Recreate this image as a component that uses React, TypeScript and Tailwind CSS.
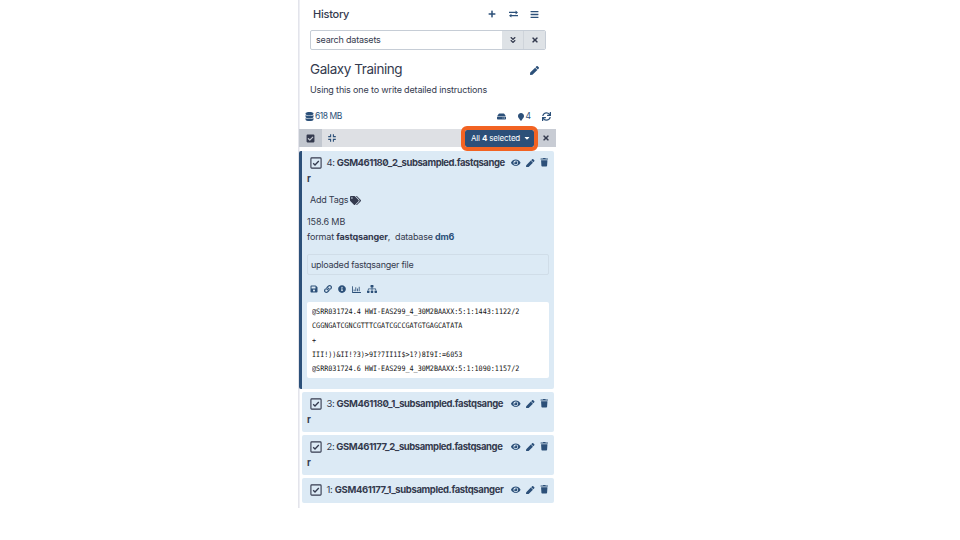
import React from "react";
import {
  FaPlus, FaBars, FaAngleDoubleDown, FaTimes, FaPen, FaDatabase, FaHdd, FaMapMarker,
  FaSync, FaCheckSquare, FaEye, FaTrash, FaTags, FaSave, FaLink, FaInfoCircle, FaRegChartBar, FaSitemap, FaCaretDown,
} from "react-icons/fa";

function Checkbox() {
  return (
    <svg viewBox="0 0 12 12" className="h-3 w-3 shrink-0" fill="none" stroke="#343a4e">
      <rect x="0.9" y="0.9" width="10.2" height="10.2" rx="0.8" strokeWidth="1.1" />
      <path d="M3.2 6.2 5 8 8.8 4" strokeWidth="1.3" />
    </svg>
  );
}

function Compress() {
  return (
    <svg viewBox="0 0 8 8" className="h-2 w-2" fill="none" stroke="#2c5079" strokeWidth="1.1">
      <path d="M0.2 2.6H2.6V0.2M5.4 0.2V2.6H7.8M7.8 5.4H5.4V7.8M2.6 7.8V5.4H0.2" />
    </svg>
  );
}

function Exchange() {
  return (
    <svg viewBox="0 0 9 8" className="ml-[13px] h-2 w-[9px]" fill="#2c5079">
      <path d="M0 1.8H6.6V0.4L9 2.4 6.6 4.4V3H0ZM9 5H2.4V3.8L0 5.7 2.4 7.6V6.2H9Z" />
    </svg>
  );
}

type RowProps = { id: number; name: string; wrap?: boolean; idClass: string; nameClass: string };

function RowHead({ id, name, wrap, idClass, nameClass }: RowProps) {
  return (
    <>
      <div className="flex h-[22px] items-center">
        <Checkbox />
        <span className={"ml-[4.5px] shrink-0 text-[9.5px] leading-none whitespace-nowrap tracking-[-0.4px] " + idClass}>{id}:</span>
        <span className={"text-[9.5px] leading-none font-bold whitespace-nowrap slashed-zero " + nameClass}>{name}</span>
        <span className="ml-auto flex shrink-0 items-center text-[#2c5079]">
          <FaEye className="mb-px size-[9.5px]" />
          <FaPen className="ml-[5.5px] size-[8.5px]" />
          <FaTrash className="mb-px ml-[5px] size-[8.5px]" />
        </span>
      </div>
      {wrap && <div className="-ml-[3px] text-[9.5px] leading-[10px] font-bold">r</div>}
    </>
  );
}

export default function App() {
  return (
    <div className="flex h-[540px] w-[960px] bg-white pl-[298px] font-['Inter','Liberation_Sans',sans-serif] text-[#343a4e]">
      <div className="h-[508px] w-[258px] border-l border-[#e3e4eb] shadow-[inset_1px_0_0_#eeeff4]">
        <div className="flex h-7 items-center pr-[17px] pl-[14px]">
          <span className="text-[11px] leading-none font-medium tracking-[-0.25px]">History</span>
          <div className="ml-auto flex items-center text-[#2c5079]">
            <FaPlus className="size-2" />
            <Exchange />
            <FaBars className="ml-[12px] size-[9px]" />
          </div>
        </div>
        <div className="mt-[2px] ml-[11px] flex h-5 w-[236px] overflow-hidden rounded-[2px] border border-[#c6cdd6]">
          <div className="flex flex-1 items-center pl-[5px] text-[9px] tracking-[-0.2px]">search datasets</div>
          <div className="flex w-[21px] items-center justify-center bg-[#dee2e6]"><FaAngleDoubleDown className="size-2" /></div>
          <div className="flex w-[22px] items-center justify-center border-l border-[#cfd4da] bg-[#dee2e6]"><FaTimes className="size-2" /></div>
        </div>
        <div className="flex h-[38px] items-center pr-[17px] pl-[11px]">
          <span className="pt-[2px] text-[13.5px] leading-none tracking-[-0.43px]">Galaxy Training</span>
          <FaPen className="mt-[2px] ml-auto size-[9px] text-[#2c5079]" />
        </div>
        <div className="flex h-1 items-center pl-[11px] text-[9px] tracking-[-0.15px]">Using this one to write detailed instructions</div>
        <div className="mt-[16px] flex h-[17px] items-center pr-[5px] pl-[6px] text-[8.5px] text-[#2c5079]">
          <FaDatabase className="size-[9px]" />
          <span className="ml-px tracking-[-0.45px]">618 MB</span>
          <FaHdd className="ml-auto size-[9px]" />
          <FaMapMarker className="ml-[11px] size-2" />
          <span className="ml-px">4</span>
          <FaSync className="ml-[11px] size-[9px]" />
        </div>
        <div className="mt-1 flex h-[18px] items-center bg-[#dee0e4]">
          <div className="flex h-full w-[23px] items-center justify-center bg-[#c2c7cf]"><FaCheckSquare className="size-[9px]" /></div>
          <div className="ml-[6px]"><Compress /></div>
          <div className="relative ml-auto flex h-[17px] w-[69px] shrink-0 items-center rounded-[2px] bg-[#2c5079] pl-[6px] text-[8px] text-white outline-4 outline-[#f26322]">
            <span className="whitespace-nowrap tracking-[-0.17px]">All <b>4</b> selected</span>
            <FaCaretDown className="mb-px ml-[3px] size-[8px]" />
          </div>
          <div className="ml-[3px] flex h-full w-[19px] items-center justify-center bg-[#c8ccd4] pr-[2px]"><FaTimes className="size-2" /></div>
        </div>
        <div className="mt-[4px] h-[238px] w-[255px] rounded-[2px] border-l-[3px] border-[#2c5079] bg-[#dceaf5] pt-px pr-[6px] pl-[8px]">
          <RowHead id={4} name="GSM461180_2_subsampled.fastqsange" wrap idClass="w-[10.2px]" nameClass="tracking-[-0.44px]" />
          <div className="mt-[8px] flex h-4 items-center text-[9px]"><span className="tracking-[-0.25px]">Add Tags</span><FaTags className="ml-[2px] size-[11px]" /></div>
          <div className="mt-[6px] -ml-[3px] text-[9px] leading-[15px]">
            <div className="tracking-[-0.1px]">158.6 MB</div>
            <div><span className="tracking-[-0.16px]">format <b>fastqsanger</b>,</span><span className="ml-[5px] tracking-[-0.2px]">database <b className="text-[#2c5079]">dm6</b></span></div>
          </div>
          <div className="mt-[10px] -ml-[3px] flex h-[21px] w-[242px] items-center rounded-[2px] border border-[#d0dde8] pl-[3px] text-[9px] tracking-[-0.24px]">uploaded fastqsanger file</div>
          <div className="mt-[10px] flex h-2 items-center gap-[6px] text-[#2c5079]">
            <FaSave className="size-2" /><FaLink className="size-2" /><FaInfoCircle className="size-2" /><FaRegChartBar className="size-[9px]" /><FaSitemap className="size-[10px]" />
          </div>
          <div className="mt-[9px] -ml-[3px] h-[76px] w-[242px] overflow-hidden rounded-[2px] bg-white pt-[3px] pl-[5px]">
            <pre className="w-max origin-left scale-x-[0.9] font-['DejaVu_Sans_Mono',monospace] text-[7.5px] leading-[14.3px] text-[#111]">{`@SRR031724.4 HWI-EAS299_4_30M2BAAXX:5:1:1443:1122/2
CGGNGATCGNCGTTTCGATCGCCGATGTGAGCATATA
+
III!))&II!?3)>9I?7II1I$>1?)8I9I:=6053
@SRR031724.6 HWI-EAS299_4_30M2BAAXX:5:1:1090:1157/2`}</pre>
          </div>
        </div>
        <div className="mt-[3px] ml-[3px] flex w-[252px] flex-col gap-[3px]">
          <div className="h-10 rounded-[2px] bg-[#dceaf5] pt-px pr-[6px] pl-2"><RowHead id={3} name="GSM461180_1_subsampled.fastqsange" wrap idClass="w-[10px]" nameClass="tracking-[-0.4px]" /></div>
          <div className="h-10 rounded-[2px] bg-[#dceaf5] pt-px pr-[6px] pl-2"><RowHead id={2} name="GSM461177_2_subsampled.fastqsange" wrap idClass="w-[9.7px]" nameClass="tracking-[-0.42px]" /></div>
          <div className="h-[25px] rounded-[2px] bg-[#dceaf5] pt-px pr-[6px] pl-2"><RowHead id={1} name="GSM461177_1_subsampled.fastqsanger" idClass="w-[8.3px]" nameClass="tracking-[-0.37px]" /></div>
        </div>
      </div>
    </div>
  );
}
